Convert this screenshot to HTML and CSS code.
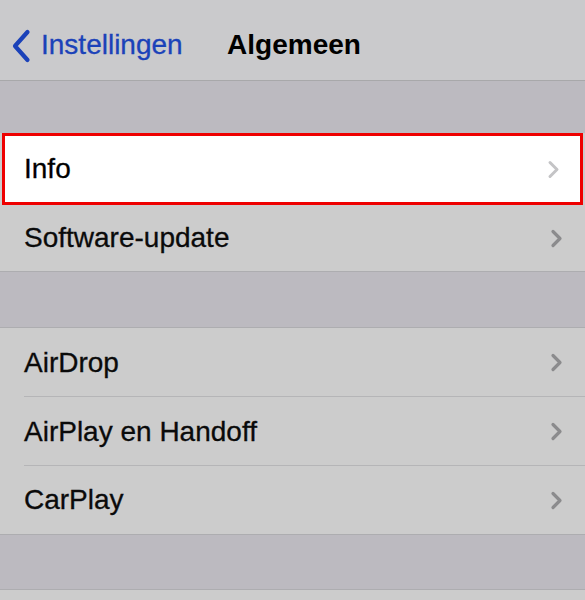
FILE: index.html
```html
<!DOCTYPE html>
<html lang="nl">
<head>
<meta charset="utf-8">
<title>Algemeen</title>
<link rel="stylesheet" href="styles.css">
</head>
<body>
<div class="screen">
  <header class="nav">
    <a class="back">
      <svg class="back-icon" width="20" height="34" viewBox="0 0 20 34"><path d="M16.5 3 L4 17 L16.5 31" fill="none" stroke="currentColor" stroke-width="4.2" stroke-linecap="round" stroke-linejoin="round"/></svg>
      <span>Instellingen</span>
    </a>
    <h1 class="title">Algemeen</h1>
  </header>

  <div class="spacer first"></div>

  <ul class="group">
    <li class="row highlight"><span class="label">Info</span><svg class="chev" width="13" height="19" viewBox="0 0 13 19"><path d="M3 2.5 L10 9.5 L3 16.5" fill="none" stroke="currentColor" stroke-width="3" stroke-linecap="round" stroke-linejoin="round"/></svg></li>
    <li class="row"><span class="label">Software-update</span><svg class="chev" width="13" height="19" viewBox="0 0 13 19"><path d="M3 2.5 L10 9.5 L3 16.5" fill="none" stroke="currentColor" stroke-width="3.2" stroke-linecap="round" stroke-linejoin="round"/></svg></li>
  </ul>

  <div class="spacer mid"></div>

  <ul class="group">
    <li class="row sep"><span class="label">AirDrop</span><svg class="chev" width="13" height="19" viewBox="0 0 13 19"><path d="M3 2.5 L10 9.5 L3 16.5" fill="none" stroke="currentColor" stroke-width="3.2" stroke-linecap="round" stroke-linejoin="round"/></svg></li>
    <li class="row sep"><span class="label">AirPlay en Handoff</span><svg class="chev" width="13" height="19" viewBox="0 0 13 19"><path d="M3 2.5 L10 9.5 L3 16.5" fill="none" stroke="currentColor" stroke-width="3.2" stroke-linecap="round" stroke-linejoin="round"/></svg></li>
    <li class="row"><span class="label">CarPlay</span><svg class="chev" width="13" height="19" viewBox="0 0 13 19"><path d="M3 2.5 L10 9.5 L3 16.5" fill="none" stroke="currentColor" stroke-width="3.2" stroke-linecap="round" stroke-linejoin="round"/></svg></li>
  </ul>

  <div class="spacer last"></div>

  <ul class="group tail">
    <li class="row"></li>
  </ul>
</div>
</body>
</html>
```

FILE: styles.css
```css
* { box-sizing: border-box; }
html, body { margin: 0; padding: 0; }
body {
  width: 585px;
  height: 600px;
  overflow: hidden;
  background: #bcbac0;
  font-family: "Liberation Sans", Arial, sans-serif;
  color: #0a0a0a;
}
.screen { display: flex; flex-direction: column; }

.nav {
  height: 81px;
  background: #cacacc;
  border-bottom: 1px solid #a8a8aa;
  padding-top: 10px;
  display: grid;
  grid-template-columns: 1fr auto 1fr;
  align-items: center;
}
.back {
  display: flex;
  align-items: center;
  color: #1b42b9;
  font-size: 28px;
  padding-left: 11px;
  grid-column: 1;
  justify-self: start;
  -webkit-text-stroke: 0.3px currentColor;
}
.back-icon { margin-right: 10px; margin-top: 1px; }
.title {
  grid-column: 2;
  margin: 0 0 0 3px;
  font-size: 28px;
  font-weight: bold;
  color: #000;
}

.spacer { background: #bcbac0; }
.spacer.first { height: 52px; }
.spacer.mid { height: 55px; }
.spacer.last { height: 54px; }

.group {
  list-style: none;
  margin: 0;
  padding: 0;
  background: #cccccc;
  border-top: 1px solid #adadb0;
  border-bottom: 1px solid #adadb0;
}
.group:first-of-type { border-top: none; }

.row {
  height: 69px;
  display: flex;
  align-items: center;
  justify-content: space-between;
  padding: 0 22px 0 24px;
  font-size: 28px;
  position: relative;
  color: #8b8b8d;
}
.row:last-child { height: 68px; }
.row .label {
  color: #0a0a0a;
  -webkit-text-stroke: 0.3px #0a0a0a;
}
.row.sep::after {
  content: "";
  position: absolute;
  left: 24px;
  right: 0;
  bottom: 0;
  height: 1px;
  background: #b5b5b7;
}
.row.highlight {
  height: 72px;
  margin: 0 2px;
  padding: 0 20px 0 19px;
  background: #ffffff;
  border: 3px solid #ee0000;
  color: #c4c4c6;
}
.row.highlight + .row { height: 66px; }
.row.highlight .label { color: #000; }

.tail .row { height: 20px; }
```
